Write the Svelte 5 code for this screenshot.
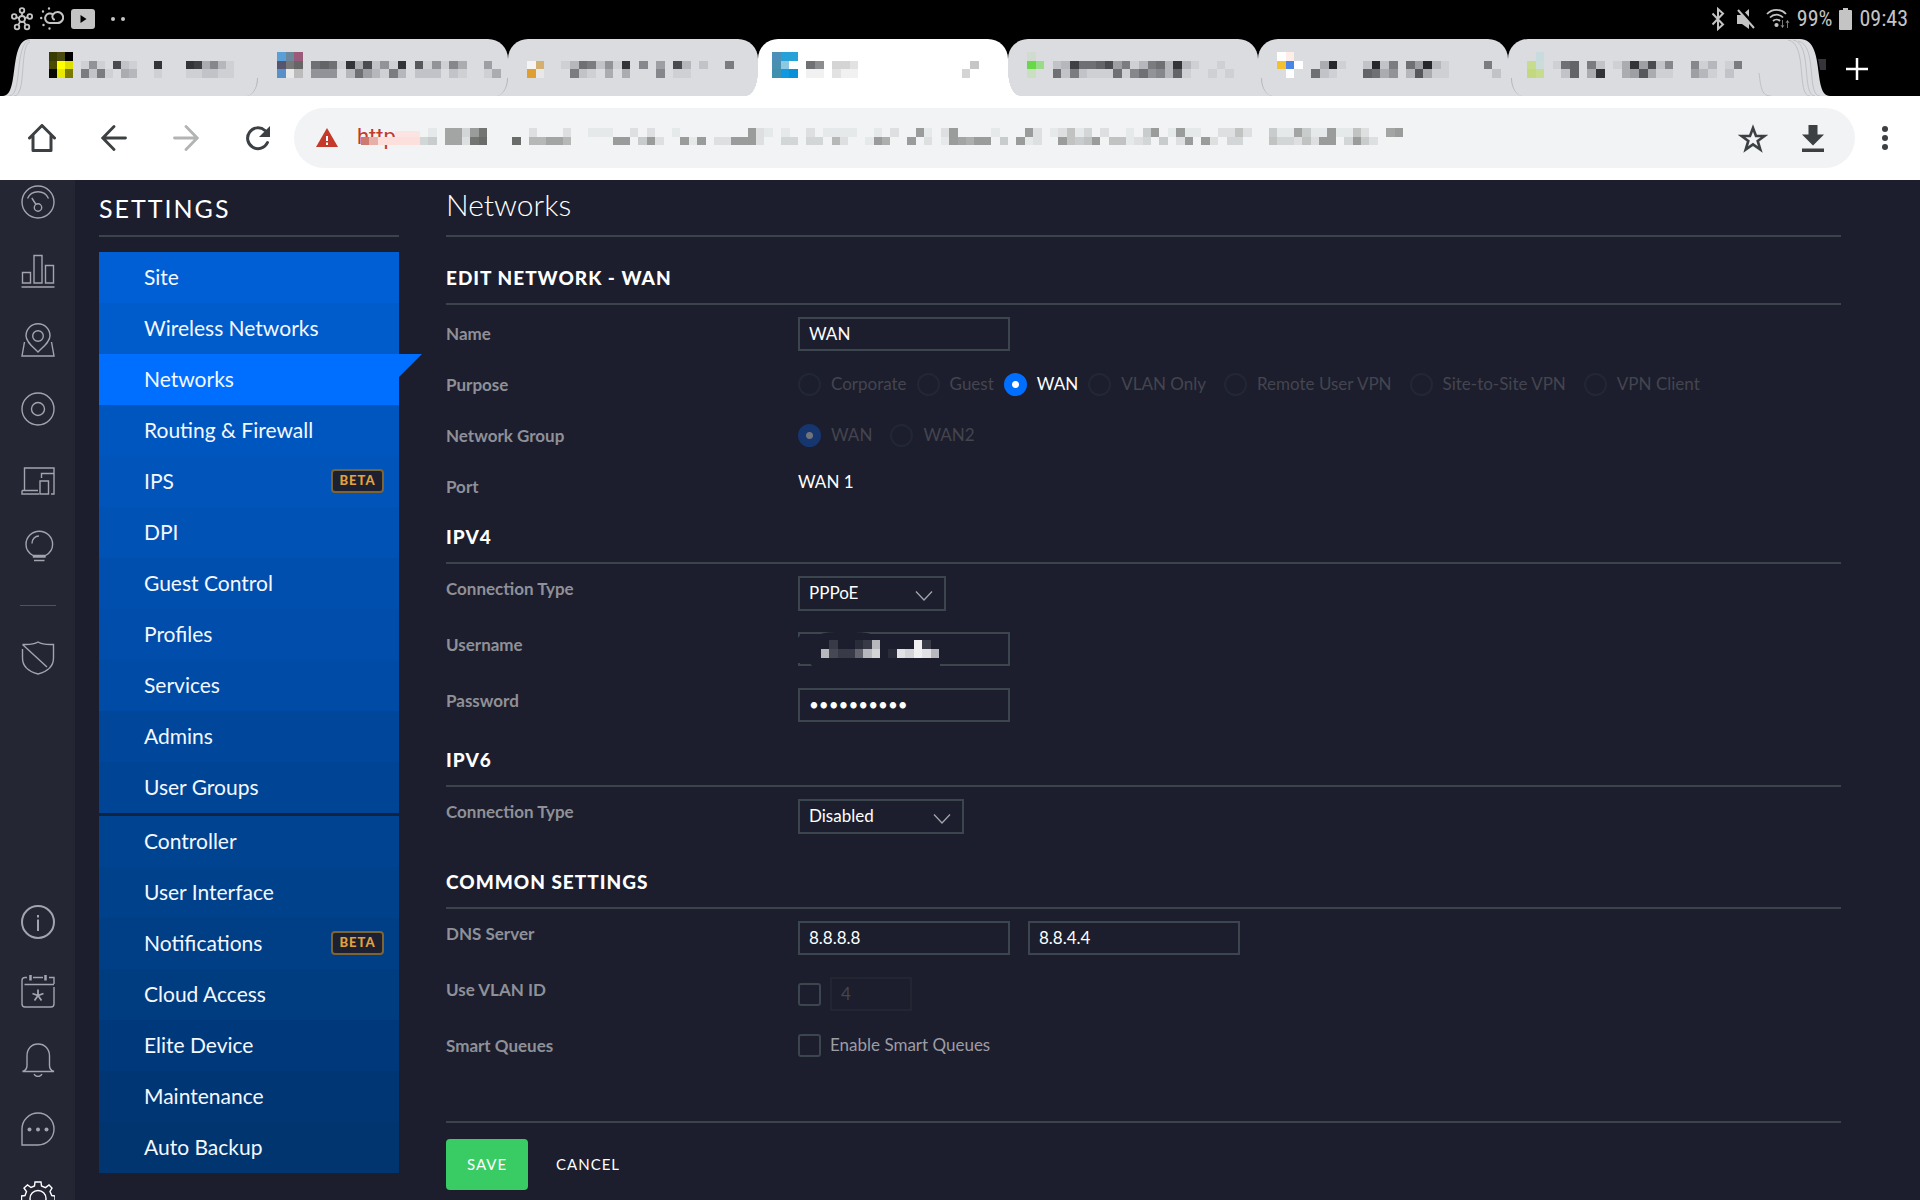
<script lang="ts">
	const tabs = [
		{
			label: 'Tab 1',
			icon: ['#3a3a05 #4a4a10 #000000', '#4a4a00 #ffff00 #dede00', '#0a0a00 #e8e800 #7a7a00'],
			rows: ['00001610c2100e000ed4731000', '00008281043001000112211000']
		},
		{
			label: 'Tab 2',
			icon: ['#5a9fd8 #6a8899 #9a5a7a', '#555570 #777777 #666666', '#5a90c8 #e8e8e8 #bbbbbb'],
			rows: ['00009a91e4c261e0b161740050', '00006660395318302220210014']
		},
		{
			label: 'Tab 3',
			icon: ['', '#f4f4f4 #d4b070', '#e0a030 #e8e8e8'],
			rows: ['00001398261e07050c30200800', '00000821040400070110000000']
		},
		{
			label: 'Tab 4',
			active: true,
			icon: ['#4a90b8 #28a0d8 #28a0d8', '#4a90b0 #8cc8e0 #ffffff', '#4090b0 #1098e0 #0a90d8'],
			rows: ['0000a803320000000000000400', '00001102110000000000003000']
		},
		{
			label: 'Tab 5',
			icon: ['#d0dcd0', '#68d848 #98dc88', '#c8e0c0'],
			rows: ['00023d99ac5813893e31001000', '00092821119179673a10010100']
		},
		{
			label: 'Tab 6',
			icon: ['#ffffff #fdeeea', '#f4c030 #4a84e8 #ffffff', '#dbdce0 #ffffff'],
			rows: ['000004f1002f28095f31000080', '0000921000a94603b411000002']
		},
		{
			label: 'Tab 7',
			icon: ['#dbdce0 #c8dce0', '#c8dc90 #ccdcd8', '#c4d880 #c8dc90'],
			rows: ['00019a082014e5c27007130180', '00002a04e0045b411005310200']
		}
	];

	const addressRows = [
		'00000000108839d0000020002001110020200100000000921010020111100' +
			'102009102900001000920125130200104901911002252004118411911520089',
		'0000000340882de000e066886000009904920091902299920033033062001' +
			'970090201987990409120095459055123040290920330005332529903942000'
	];

	const userRows = ['020012b0000f20', 'b3225bd01edfeb'];

	const menu = [
		[
			{ label: 'Site', color: '#005fd4' },
			{ label: 'Wireless Networks', color: '#005bcb' },
			{ label: 'Networks', color: '#006fff', active: true },
			{ label: 'Routing & Firewall', color: '#0056bf' },
			{ label: 'IPS', color: '#0054ba', beta: true },
			{ label: 'DPI', color: '#0052b5' },
			{ label: 'Guest Control', color: '#004fae' },
			{ label: 'Profiles', color: '#004dab' },
			{ label: 'Services', color: '#004ba6' },
			{ label: 'Admins', color: '#00479b' },
			{ label: 'User Groups', color: '#004595' }
		],
		[
			{ label: 'Controller', color: '#004491' },
			{ label: 'User Interface', color: '#00418c' },
			{ label: 'Notifications', color: '#003e85', beta: true },
			{ label: 'Cloud Access', color: '#003c80' },
			{ label: 'Elite Device', color: '#00397b' },
			{ label: 'Maintenance', color: '#003673' },
			{ label: 'Auto Backup', color: '#00356f' }
		]
	];

	const purposes = [
		{ label: 'Corporate', close: true },
		{ label: 'Guest', close: true },
		{ label: 'WAN', close: true },
		{ label: 'VLAN Only' },
		{ label: 'Remote User VPN' },
		{ label: 'Site-to-Site VPN' },
		{ label: 'VPN Client' }
	];

	let name = $state('WAN');
	let ipv4Type = $state('PPPoE');
	let ipv6Type = $state('Disabled');
	let username = $state('');
	let password = $state('0123456789');
	let dns1 = $state('8.8.8.8');
	let dns2 = $state('8.8.4.4');
	let useVlan = $state(false);
	let vlanId = $state('4');
	let smartQueues = $state(false);
	let address = $state('https');
</script>

{#snippet blocks(rows: string[], top: number)}
	{#each rows as row, y}
		{#each row.split('') as level, x}
			{#if level !== '0'}
				<rect {x} y={y + top} width="1" height="1" opacity={parseInt(level, 16) / 16} />
			{/if}
		{/each}
	{/each}
{/snippet}

{#snippet chevron()}
	<svg class="chevron" viewBox="0 0 18 10" width="18" height="10" aria-hidden="true">
		<path d="M1 .5l8 8.5 8-8.5" fill="none" stroke="currentColor" stroke-width="1.3" />
	</svg>
{/snippet}

<div class="screen">
	<div class="status">
		<div class="status-side">
			<svg viewBox="0 0 22 24" width="22" height="24" fill="none" stroke="currentColor" stroke-width="1.8">
				<circle cx="11" cy="12" r="3" />
				<circle cx="11" cy="3.5" r="2.3" />
				<circle cx="3.2" cy="9.5" r="2.3" />
				<circle cx="18.8" cy="9.5" r="2.3" />
				<circle cx="6" cy="20" r="2.3" />
				<circle cx="16" cy="20" r="2.3" />
				<path d="M11 6v3M5.4 10.2l2.8.9M16.6 10.2l-2.8.9M7.2 18l2-3.4M14.8 18l-2-3.4" />
			</svg>
			<svg viewBox="0 0 24 24" width="24" height="24" fill="none" stroke="currentColor" stroke-width="2" stroke-linecap="round">
				<path d="M9.500 16h8a5.500 5.500 0 1 0-4.500-8.500c-1.500 2.500 0 4.500 1 5M9.500 16a4.800 4.800 0 1 1 3.500-8.500" />
				<path d="M3 4.500v.1M9 1.500v.1M1.200 11v.1M3.500 18v.1M9.500 21.500v.1" stroke-width="2.400" />
			</svg>
			<svg viewBox="0 0 24 20" width="24" height="20" fill="currentColor">
				<path fill-rule="evenodd" d="M3 0h18a3 3 0 0 1 3 3v14a3 3 0 0 1-3 3H3a3 3 0 0 1-3-3V3a3 3 0 0 1 3-3zm6.500 6v8l6-4z" />
			</svg>
			<svg class="more-dots" viewBox="0 0 14 4" width="14" height="4" fill="currentColor">
				<circle cx="2" cy="2" r="2" />
				<circle cx="12" cy="2" r="2" />
			</svg>
		</div>
		<div class="status-side">
			<svg viewBox="0 0 14 24" width="14" height="24" fill="none" stroke="currentColor" stroke-width="2">
				<path d="M1.500 6.500l10.500 11L7 22V2l5 4.500-10.500 11" />
			</svg>
			<svg class="mute" viewBox="0 0 20 24" width="20" height="24" fill="currentColor">
				<path d="M1 8h5l7-6v20l-7-5H1z" />
				<path d="M3 1l17 19" stroke="#000" stroke-width="3" />
				<path d="M2 3l16 18" stroke="currentColor" stroke-width="2" />
			</svg>
			<svg viewBox="0 0 24 22" width="24" height="22" fill="none" stroke="currentColor" stroke-width="1.800">
				<path d="M1 6a13 13 0 0 1 19 0M4 9.500a9 9 0 0 1 13 0M7 13a5 5 0 0 1 7 0" />
				<circle cx="10.500" cy="17" r="1.200" fill="currentColor" />
				<path d="M16.500 12v7M15 17l1.500 2.500L18 17M21.500 20v-7M20 15l1.500-2.500L23 15" stroke-width="1" opacity=".6" />
			</svg>
			<span>99%</span>
			<svg viewBox="0 0 13 22" width="13" height="22" fill="currentColor">
				<path d="M4 0h5v2h3a1 1 0 0 1 1 1v18a1 1 0 0 1-1 1H1a1 1 0 0 1-1-1V3a1 1 0 0 1 1-1h3z" />
			</svg>
			<span>09:43</span>
		</div>
	</div>

	<div class="tabs" role="tablist">
		<svg viewBox="0 0 30 57" width="30" height="57">
			<path d="M3 57C20 57 8 0 30 0v57z" fill="#dbdce0" />
			<path d="M9 57C23 57 14 4 30 1M14 57C27 57 19 6 30 3" fill="none" stroke="#c0c1c5" />
		</svg>
		{#each tabs as tab, i}
			<button class="tab" class:first={i === 0} class:active={tab.active} class:after={i > 4} class:before={i < 2} role="tab" aria-selected={!!tab.active} aria-label={tab.label}>
				<svg class="mosaic" viewBox="0 0 26 3" width="224" height="26" preserveAspectRatio="none" shape-rendering="crispEdges" fill="#1a1b20">
					{#each tab.icon as line, y}
						{#each line.split(' ').filter(Boolean) as fill, x}
							<rect {x} {y} width="1" height="1" {fill} />
						{/each}
					{/each}
					{@render blocks(tab.rows, 1)}
				</svg>
			</button>
		{/each}
		<svg viewBox="0 0 72 57" width="72" height="57">
			<path d="M0 0H42C68 0 54 57 72 57H0z" fill="#dbdce0" />
			<path d="M1 34C3 50 4 57 13 57M30 1C50 4 38 57 52 57M35 1C55 4 43 57 57 57M40 2C60 6 48 57 62 57" fill="none" stroke="#c0c1c5" />
			<path d="M60 20h8v11h-6z" fill="#34353a" />
		</svg>
		<button class="new-tab" aria-label="New tab">
			<svg viewBox="0 0 22 22" width="22" height="22"><path d="M11 0v22M0 11h22" stroke="#fff" stroke-width="2.500" /></svg>
		</button>
	</div>

	<div class="toolbar">
		<button class="tool" aria-label="Home">
			<svg viewBox="0 0 28 28" width="28" height="28" fill="none" stroke="currentColor" stroke-width="3" stroke-linejoin="round" stroke-linecap="round">
				<path d="M1.500 14L14 1.500 26.500 14M5 11.500V26.500h18V11.500" />
			</svg>
		</button>
		<button class="tool" aria-label="Back">
			<svg viewBox="0 0 26 26" width="26" height="26" fill="none" stroke="currentColor" stroke-width="2.800" stroke-linecap="round">
				<path d="M24.500 13H2M13 1.500L1.800 13 13 24.500" />
			</svg>
		</button>
		<button class="tool faded" aria-label="Forward">
			<svg viewBox="0 0 26 26" width="26" height="26" fill="none" stroke="currentColor" stroke-width="2.800" stroke-linecap="round">
				<path d="M1.500 13H24M13 1.500L24.200 13 13 24.500" />
			</svg>
		</button>
		<button class="tool" aria-label="Reload">
			<svg viewBox="0 0 26 26" width="26" height="26">
				<path d="M22.500 17.500A10.400 10.400 0 1 1 20 5.500" fill="none" stroke="currentColor" stroke-width="3" stroke-linecap="round" />
				<path d="M25 1v11H14z" fill="currentColor" />
			</svg>
		</button>
		<div class="omnibox">
			<svg viewBox="0 0 26 22" width="26" height="22">
				<path d="M13 1l11 19H2z" fill="#c5392a" />
				<path d="M13 9v5M13 15.500v2.500" stroke="#fff" stroke-width="2" />
			</svg>
			<div class="address">
				<input type="text" aria-label="Address" bind:value={address} />
				<svg viewBox="0 0 124 2" width="1042" height="17" preserveAspectRatio="none" shape-rendering="crispEdges" fill="#555855">
					<rect x="0" y="1" width="1" height="1" fill="#cc7a70" />
					<rect x="1" y="1" width="1" height="1" fill="#e6b0a8" />
					<rect x="2" y="1" width="5" height="1" fill="#fddfdb" />
					<rect x="4" y=".4" width="3" height=".6" fill="#fbe4e1" />
					{@render blocks(addressRows, 0)}
				</svg>
			</div>
			<button class="omni-tool" aria-label="Bookmark this page">
				<svg viewBox="0 0 30 29" width="30" height="29" fill="none" stroke="currentColor" stroke-width="2.600">
					<path d="M15 4l3 8h8.500l-6.800 5 2.600 8.500L15 20.400l-7.300 5.100 2.600-8.500-6.800-5H12z" />
				</svg>
			</button>
			<button class="omni-tool" aria-label="Download page">
				<svg viewBox="0 0 22 28" width="22" height="28" fill="currentColor">
					<path d="M6.500 1h9v9.500H22l-11 11-11-11h6.500zM0 24.500h22V28H0z" />
				</svg>
			</button>
		</div>
		<button class="menu-button" aria-label="Menu">
			<svg viewBox="0 0 6 26" width="6" height="26" fill="currentColor">
				<circle cx="3" cy="4" r="3" />
				<circle cx="3" cy="13" r="3" />
				<circle cx="3" cy="22" r="3" />
			</svg>
		</button>
	</div>

	<div class="app">
		<nav class="rail" aria-label="Main">
			<a href="#dashboard" aria-label="Dashboard">
				<svg viewBox="0 0 34 34">
					<circle cx="17" cy="17" r="16" />
					<circle cx="17" cy="22.500" r="3.700" />
					<path d="M15 19.500l-4.200-6.500M6.500 13.500a11.500 11.500 0 0 1 21 0" />
				</svg>
			</a>
			<a href="#statistics" aria-label="Statistics">
				<svg viewBox="0 0 34 34">
					<path d="M1.500 18.500h8V29h-8zM13 1.500h8V29h-8zM24.500 11.500h8V29h-8zM.5 33h33" />
				</svg>
			</a>
			<a href="#map" aria-label="Map">
				<svg viewBox="0 0 34 34">
					<path d="M17 29C12 24 5 19 5 12.700a12 12 0 0 1 24 0C29 19 22 24 17 29z" />
					<circle cx="17" cy="13" r="5.300" />
					<path d="M3.500 19L1 33h32l-2.500-14" />
				</svg>
			</a>
			<a href="#devices" aria-label="Devices">
				<svg viewBox="0 0 34 34">
					<circle cx="17" cy="17" r="16" />
					<circle cx="17" cy="17" r="6.500" />
				</svg>
			</a>
			<a href="#clients" aria-label="Clients">
				<svg viewBox="0 0 34 34">
					<path d="M3.500 29V7H33v5M20.500 17v-4.500H33V33h-3M1 29.500h16M1 29.500V33h17M19 20h8.500v13H19z" />
				</svg>
			</a>
			<a href="#insights" aria-label="Insights">
				<svg viewBox="0 0 34 34">
					<path d="M12 25.500c-4.500-2.500-7-6-7-11a13.300 13.300 0 0 1 26.600 0c0 5-2.600 8.500-7 11zM12.500 26v1h11.500v-1M13 30.500h10.500M11 13.500a7 7 0 0 1 7-7.500" />
				</svg>
			</a>
			<hr />
			<a href="#security" aria-label="Security">
				<svg viewBox="0 0 34 34">
					<path d="M1.500 3.500C8 3.800 13 3.500 17 1c4 2.500 9 2.800 15.500 2.500V17c0 8-6 13.500-15.500 16C7.500 30.500 1.500 25 1.500 17V8M1.500 3.500L26 26" />
				</svg>
			</a>
			<div class="rail-bottom">
				<a href="#about" aria-label="About">
					<svg viewBox="0 0 34 34">
						<g stroke-width="2">
							<circle cx="17" cy="17" r="16" />
							<path d="M17 14.500V26M17 10v2.500" />
						</g>
					</svg>
				</a>
				<a href="#events" aria-label="Events">
					<svg viewBox="0 0 34 34">
						<path d="M6 3.500H4a3 3 0 0 0-3 3V30a3 3 0 0 0 3 3h26a3 3 0 0 0 3-3V13M12 3.500h10M28 3.500h5V10M3.500 10.500H33" />
						<path d="M9.500 1v5.500M24.500 1v5.500" stroke-width="2.500" />
						<path d="M17 15.500v6M11.500 19.500l5.500 2 5.500-2M13.500 26.500l3.500-5 3.500 5" stroke-width="1.800" />
					</svg>
				</a>
				<a href="#alerts" aria-label="Alerts">
					<svg viewBox="0 0 34 34">
						<path d="M1.500 28.500c3-1 4.500-2.500 4.500-6V13C6 5.500 10.500 1 17 1s11.500 4.500 11.500 12v9.500c0 3.500 1.500 5 4.500 6zM13 31c.8 1.500 2.200 2.500 4 2.500s3.200-1 4-2.500" />
					</svg>
				</a>
				<a href="#chat" aria-label="Chat">
					<svg viewBox="0 0 34 34">
						<path d="M1 33V17a16 16 0 1 1 16 16z" />
						<g fill="currentColor" stroke="none">
							<circle cx="8.500" cy="17.500" r="2" />
							<circle cx="17" cy="17.500" r="2" />
							<circle cx="25.500" cy="17.500" r="2" />
						</g>
					</svg>
				</a>
				<a class="current" href="#settings" aria-label="Settings">
					<svg viewBox="0 0 34 34">
						<path d="M13.500 5L14 1h6l.5 4 4 1.600L28 4l3 3-2 3.500 1.800 4 3.200.5v5l-4 .8L28.300 25l2.200 3.500-3.500 3L23.500 29 20 30.500l-.8 3.500h-4.700l-.8-3.500L10 29l-3.500 2.500L3 28l2.500-3.500L4 21l-3.500-1v-5l3.500-.5 1.500-4L3 7l3.500-3L10 6.500z" />
						<circle cx="17" cy="17.500" r="8" />
					</svg>
				</a>
			</div>
		</nav>

		<aside class="side">
			<h2>SETTINGS</h2>
			{#each menu as group}
				<ul>
					{#each group as item}
						<li style="background: {item.color}" class:active={item.active}>
							<a href="#{item.label.toLowerCase().replaceAll(' ', '-')}">
								{item.label}
								{#if item.beta}<span class="beta">BETA</span>{/if}
							</a>
						</li>
					{/each}
				</ul>
			{/each}
		</aside>

		<main>
			<h1>Networks</h1>
			<form onsubmit={(e) => e.preventDefault()}>
				<section class="basics">
					<h3>EDIT NETWORK - WAN</h3>
					<div class="row">
						<label class="name" for="name">Name</label>
						<div class="controls"><input id="name" class="text" type="text" bind:value={name} /></div>
					</div>
					<div class="row" role="radiogroup" aria-labelledby="purpose">
						<span class="name" id="purpose">Purpose</span>
						<div class="controls radios">
							{#each purposes as item}
								<label class="radio" class:close={item.close} class:on={item.label === 'WAN'}>
									<input type="radio" name="purpose" checked={item.label === 'WAN'} disabled={item.label !== 'WAN'} />
									{item.label}
								</label>
							{/each}
						</div>
					</div>
					<div class="row" role="radiogroup" aria-labelledby="group">
						<span class="name" id="group">Network Group</span>
						<div class="controls radios">
							<label class="radio"><input type="radio" name="group" checked disabled />WAN</label>
							<label class="radio"><input type="radio" name="group" disabled />WAN2</label>
						</div>
					</div>
					<div class="row">
						<span class="name">Port</span>
						<div class="controls">WAN 1</div>
					</div>
				</section>

				<section>
					<h3>IPV4</h3>
					<div class="row">
						<label class="name" for="ipv4">Connection Type</label>
						<div class="controls">
							<div class="select">
								<select id="ipv4" bind:value={ipv4Type}>
									<option>PPPoE</option>
									<option>DHCP</option>
								</select>
								{@render chevron()}
							</div>
						</div>
					</div>
					<div class="row">
						<label class="name" for="username">Username</label>
						<div class="controls">
							<div class="covered">
								<input id="username" class="text" type="text" bind:value={username} />
								<svg viewBox="0 0 148 34" width="148" height="34" aria-hidden="true">
									<path d="M0 6l3-4h20c6-3 42-3 50 0l4 29h65v3H14l-2-3H0z" fill="#1c1e2d" />
									<svg x="23" y="8" viewBox="0 0 14 2" width="118" height="18" preserveAspectRatio="none" shape-rendering="crispEdges" fill="#fff">
										{@render blocks(userRows, 0)}
									</svg>
								</svg>
							</div>
						</div>
					</div>
					<div class="row">
						<label class="name" for="password">Password</label>
						<div class="controls"><input id="password" class="text" type="password" bind:value={password} /></div>
					</div>
				</section>

				<section class="ipv6">
					<h3>IPV6</h3>
					<div class="row">
						<label class="name" for="ipv6">Connection Type</label>
						<div class="controls">
							<div class="select wide">
								<select id="ipv6" bind:value={ipv6Type}>
									<option>Disabled</option>
									<option>DHCPv6</option>
								</select>
								{@render chevron()}
							</div>
						</div>
					</div>
				</section>

				<section>
					<h3>COMMON SETTINGS</h3>
					<div class="row">
						<label class="name" for="dns">DNS Server</label>
						<div class="controls pair">
							<input id="dns" class="text" type="text" bind:value={dns1} />
							<input class="text" type="text" aria-label="Second DNS server" bind:value={dns2} />
						</div>
					</div>
					<div class="row">
						<label class="name" for="vlan">Use VLAN ID</label>
						<div class="controls checks">
							<input id="vlan" type="checkbox" bind:checked={useVlan} />
							<input class="text short" type="text" aria-label="VLAN ID" disabled={!useVlan} bind:value={vlanId} />
						</div>
					</div>
					<div class="row">
						<span class="name">Smart Queues</span>
						<div class="controls">
							<label class="checks">
								<input type="checkbox" bind:checked={smartQueues} />
								Enable Smart Queues
							</label>
						</div>
					</div>
				</section>

				<div class="actions">
					<button class="save" type="submit">SAVE</button>
					<button type="button">CANCEL</button>
				</div>
			</form>
		</main>
	</div>
</div>

<style>
	:global(body) {
		background: #1c1e2d;
	}

	.screen {
		height: 100vh;
		display: flex;
		flex-direction: column;
		overflow: hidden;
		font-family: Lato, sans-serif;
		font-size: 17px;
		line-height: 24px;
		color: #fff;
	}

	.screen,
	.screen * {
		box-sizing: border-box;
	}

	button {
		border: 0;
		padding: 0;
		background: none;
		color: inherit;
		font: inherit;
		cursor: pointer;
	}

	svg {
		display: block;
		flex-shrink: 0;
	}

	/* browser chrome */
	.status {
		display: flex;
		justify-content: space-between;
		height: 39px;
		flex-shrink: 0;
		padding: 0 12px 1px 11px;
		background: #000;
		color: #c4c4c4;
		font-family: 'Roboto Condensed', Roboto, sans-serif;
		font-size: 22px;
	}

	.status-side {
		display: flex;
		align-items: center;
		gap: 7px;
	}

	.more-dots {
		margin-left: 9px;
	}

	.mute {
		margin: 0 3px 0 4px;
	}

	.tabs {
		display: flex;
		align-items: center;
		height: 57px;
		flex-shrink: 0;
		background: #000;
	}

	.tab {
		position: relative;
		flex: 0 1 250px;
		min-width: 0;
		height: 57px;
		padding: 0 0 6px 19px;
		background: #dbdce0;
		border-radius: 20px 20px 0 0;
	}

	.tab.first {
		flex-basis: 228px;
		border-radius: 0;
	}

	.tab.first + .tab {
		border-top-left-radius: 0;
	}

	.tab:nth-last-child(3) {
		border-top-right-radius: 0;
	}

	.mosaic {
		max-width: 100%;
	}

	.tab.active {
		z-index: 1;
		padding-left: 14px;
		background: #fff;
	}

	.tab.active::before,
	.tab.active::after {
		content: '';
		position: absolute;
		bottom: 0;
		left: -12px;
		width: 12px;
		height: 24px;
		background: radial-gradient(ellipse 12px 24px at 0 0, transparent 98%, #fff);
	}

	.tab.active::after {
		left: 100%;
		background: radial-gradient(ellipse 12px 24px at 100% 0, transparent 98%, #fff);
	}

	.tab.before::after,
	.tab.after::before {
		content: '';
		position: absolute;
		bottom: 0;
		right: 0;
		width: 12px;
		height: 18px;
		border-right: 1px solid #b5b6ba;
		border-bottom-right-radius: 12px 18px;
	}

	.tab.after::before {
		right: auto;
		left: 3px;
		border-right: 0;
		border-left: 1px solid #b5b6ba;
		border-bottom-right-radius: 0;
		border-bottom-left-radius: 12px 18px;
	}

	.new-tab {
		width: 54px;
		display: flex;
		justify-content: center;
		padding-top: 3px;
	}

	.toolbar {
		display: flex;
		align-items: center;
		height: 84px;
		flex-shrink: 0;
		padding: 0 5px 0 6px;
		background: #fff;
		color: #3c4043;
	}

	.tool {
		width: 72px;
		display: flex;
		justify-content: center;
	}

	.faded {
		color: #b1b3b4;
	}

	.omnibox {
		flex: 1;
		min-width: 0;
		display: flex;
		align-items: center;
		height: 60px;
		padding: 0 12px 0 20px;
		background: #f1f3f4;
		border-radius: 30px;
	}

	.address {
		flex: 1;
		min-width: 0;
		display: grid;
		align-items: center;
		padding: 0 0 3px 17px;
		overflow: hidden;
	}

	.address > * {
		grid-area: 1 / 1;
	}

	.address input {
		width: 100%;
		padding: 0;
		border: 0;
		outline: 0;
		background: none;
		font: 22px/28px Roboto, sans-serif;
		color: #c5392a;
	}

	.address svg {
		margin-left: 4px;
		pointer-events: none;
	}

	.omni-tool,
	.menu-button {
		width: 60px;
		display: flex;
		justify-content: center;
	}

	/* controller */
	.app {
		flex: 1;
		min-height: 0;
		display: flex;
	}

	.rail {
		width: 75px;
		flex-shrink: 0;
		display: flex;
		flex-direction: column;
		align-items: center;
		gap: 35px;
		padding-top: 5px;
		background: #242634;
		color: #a3a4ad;
	}

	.rail a {
		color: inherit;
	}

	.rail svg {
		width: 34px;
		height: 34px;
		fill: none;
		stroke: currentColor;
		stroke-width: 1.4;
	}

	.rail hr {
		width: 36px;
		margin: 6px 0 0;
		border: 0;
		border-top: 1px solid #50525f;
	}

	.rail-bottom {
		display: flex;
		flex-direction: column;
		gap: 35px;
		margin-top: auto;
		margin-bottom: -15px;
	}

	.rail .current {
		color: #fff;
	}

	.side {
		width: 300px;
		flex-shrink: 0;
		margin-left: 24px;
	}

	h2 {
		margin: 0 0 15px;
		padding: 12px 0 11px;
		border-bottom: 2px solid #3b434c;
		font-size: 25px;
		line-height: 32px;
		font-weight: 400;
		letter-spacing: 2px;
	}

	ul {
		margin: 0;
		padding: 0;
		list-style: none;
	}

	ul + ul {
		border-top: 3px solid #12233f;
	}

	li {
		position: relative;
	}

	li.active::after {
		content: '';
		position: absolute;
		top: 0;
		left: 100%;
		border-top: 23px solid #006fff;
		border-right: 23px solid transparent;
	}

	li a {
		display: flex;
		align-items: center;
		justify-content: space-between;
		height: 51px;
		padding: 0 15px 1px 45px;
		color: #f4f8ff;
		font-size: 21px;
		text-decoration: none;
	}

	.beta {
		width: 53px;
		padding-bottom: 1px;
		border: 2px solid #7d6434;
		border-radius: 4px;
		background: #1d2030;
		color: #e5a23c;
		font-size: 13px;
		line-height: 19px;
		font-weight: 900;
		letter-spacing: 1px;
		text-align: center;
	}

	main {
		flex: 1;
		min-width: 0;
		padding: 0 79px 0 47px;
	}

	h1 {
		margin: 0 0 13px;
		padding: 6px 0 13px;
		border-bottom: 2px solid #3b434c;
		font-size: 30px;
		line-height: 36px;
		font-weight: 300;
	}

	h3 {
		margin: 0;
		padding: 16px 0 13px;
		border-bottom: 2px solid #3b434c;
		font-size: 19px;
		line-height: 24px;
		font-weight: 900;
		letter-spacing: 1px;
	}

	.row {
		display: flex;
		min-height: 56px;
	}

	.basics .row {
		height: 51px;
		min-height: 0;
	}

	.ipv6 .row {
		min-height: 67px;
	}

	.name {
		width: 352px;
		flex-shrink: 0;
		padding-top: 13px;
		font-weight: 700;
		color: #8f9098;
	}

	.basics .name {
		padding-top: 17px;
	}

	.controls {
		padding-top: 12px;
	}

	.text,
	select {
		display: block;
		width: 212px;
		height: 34px;
		margin: 0;
		padding: 0 9px 2px;
		border: 2px solid #3b464e;
		border-radius: 0;
		background: transparent;
		color: #fff;
		font: inherit;
	}

	select {
		width: 148px;
		height: 35px;
		appearance: none;
	}

	.wide select {
		width: 166px;
	}

	option {
		background: #1c1e2d;
	}

	.select,
	.covered {
		display: grid;
		align-items: center;
	}

	.select > :global(*),
	.covered > * {
		grid-area: 1 / 1;
	}

	.chevron {
		justify-self: end;
		margin: 4px 13px 0 0;
		color: #a3a4ad;
		pointer-events: none;
	}

	.covered svg {
		pointer-events: none;
	}

	.radios {
		display: flex;
		align-items: center;
		height: 44px;
	}

	.radio {
		display: flex;
		align-items: center;
		gap: 10px;
		margin-right: 18px;
		color: #44454f;
		white-space: nowrap;
	}

	.radio.close {
		margin-right: 10px;
	}

	.radio.on {
		color: #fff;
	}

	input[type='radio'],
	input[type='checkbox'] {
		appearance: none;
		width: 23px;
		height: 23px;
		flex-shrink: 0;
		margin: 0;
		border: 2px solid #222735;
		border-radius: 50%;
	}

	input[type='radio']:checked {
		border-color: #006fff;
		background: radial-gradient(circle, #fff 3px, #006fff 4px);
	}

	input[type='radio']:checked:disabled {
		border-color: #16366f;
		background: radial-gradient(circle, #73747a 3px, #16366f 4px);
	}

	input[type='checkbox'] {
		border-color: #3b464e;
		border-radius: 3px;
	}

	input[type='checkbox']:checked {
		background: #006fff;
	}

	.pair {
		display: flex;
		gap: 18px;
		align-self: flex-start;
	}

	.checks {
		display: flex;
		align-items: center;
		gap: 9px;
		color: #9c9da4;
	}

	.controls.checks {
		align-self: flex-start;
	}

	.short {
		width: 82px;
	}

	.text:disabled {
		border-color: #232533;
		color: #44454f;
	}

	.actions {
		display: flex;
		align-items: center;
		gap: 28px;
		margin-top: 44px;
		padding-top: 16px;
		border-top: 2px solid #3b434c;
		font-size: 15px;
	}

	.actions button {
		height: 51px;
		padding-bottom: 2px;
		letter-spacing: 1px;
	}

	.save {
		width: 82px;
		border-radius: 4px;
		background: #39cc64;
	}
</style>
